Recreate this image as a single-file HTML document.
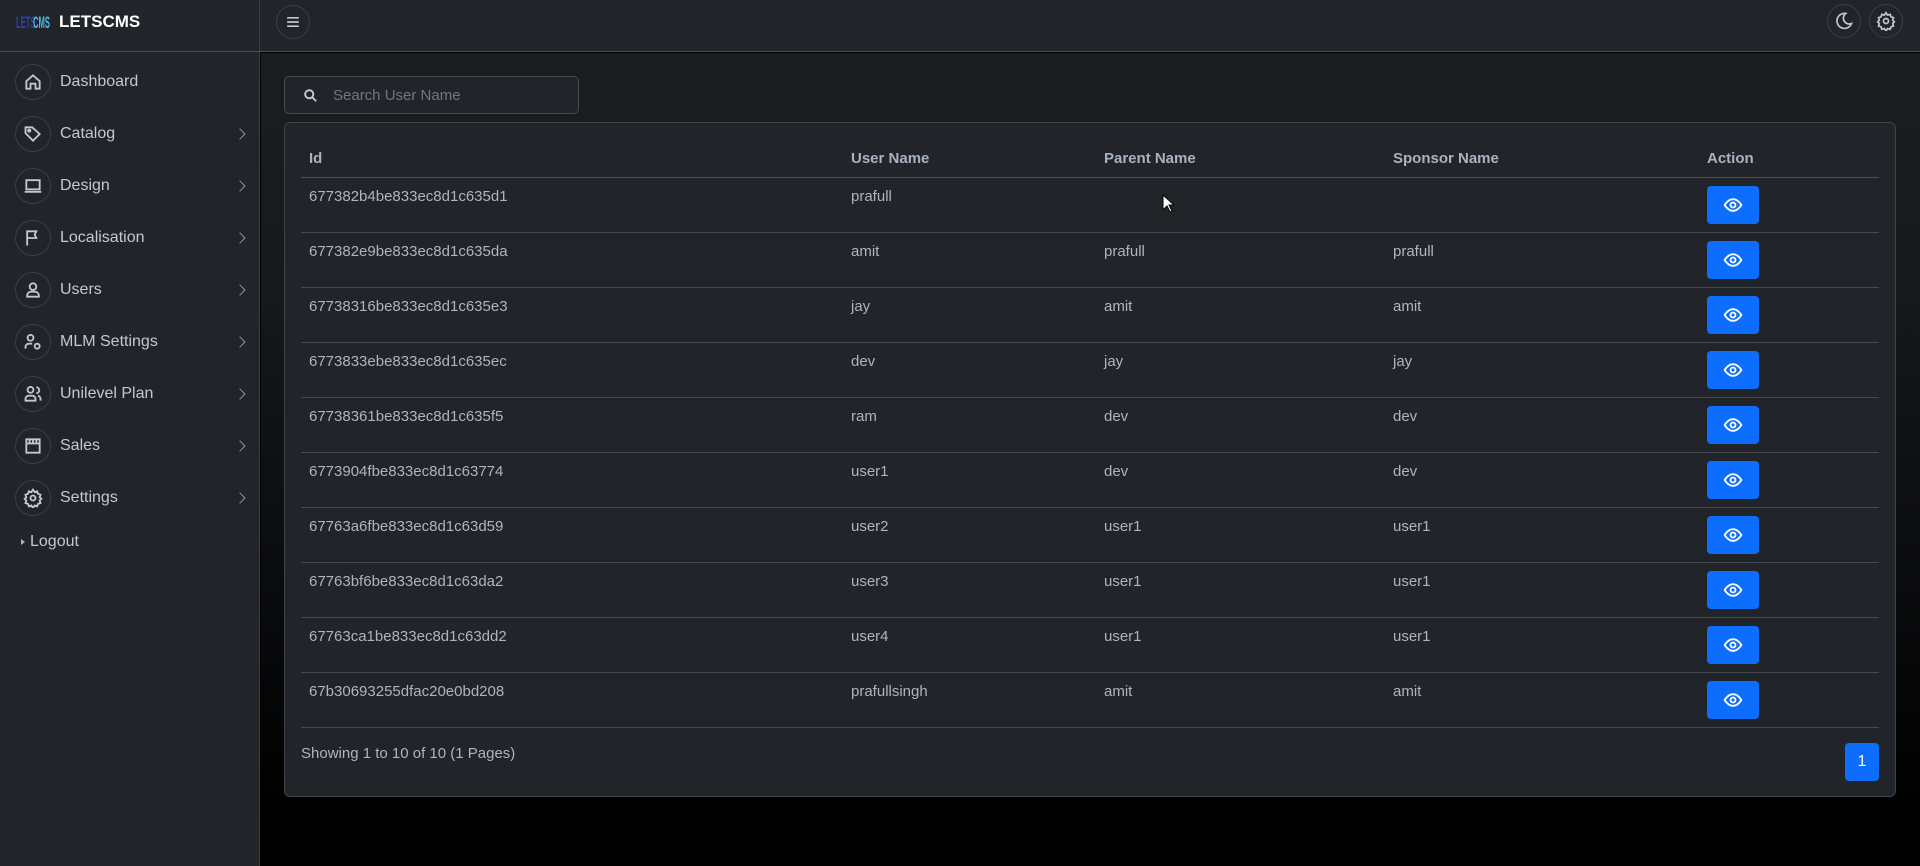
<!DOCTYPE html>
<html><head><meta charset="utf-8">
<style>
*{box-sizing:border-box;margin:0;padding:0}
html,body{width:1920px;height:866px;overflow:hidden}
body{font-family:"Liberation Sans",sans-serif;color:#adb5bd;background:#000;position:relative}
.side{position:absolute;left:0;top:0;width:260px;height:866px;background:#212529;border-right:1px solid #3a3f45}
.top{position:absolute;left:260px;top:0;right:0;height:52px;background:#212529;border-bottom:1px solid #4a4f55}
.lg{position:absolute;left:16px;top:14px;width:34px;height:17px;overflow:hidden}
.lg span{position:absolute;top:0;font-size:17px;font-weight:bold;line-height:17px;transform:scaleX(0.45);transform-origin:left;white-space:nowrap}
.lgt{position:absolute;left:59px;top:12px;color:#fff;font-weight:bold;font-size:17px}
.sl{position:absolute;left:0;top:51px;width:260px;border-top:1px solid #4a4f55}
.nav{position:absolute;left:15px;height:38px;width:235px;display:flex;align-items:center}
.nav .c{width:36px;height:36px;border:1px solid #3a3f45;border-radius:50%;display:flex;align-items:center;justify-content:center}
.nav .c svg{width:20px;height:20px;stroke:#c0c8d0;fill:none;stroke-width:2.2}
.nav .tx{margin-left:9px;font-size:16px;color:#c3c9cf}
.nav .ch{position:absolute;right:6px;top:15px;width:8px;height:8px;border-right:1.5px solid #8a939b;border-top:1.5px solid #8a939b;transform:rotate(45deg)}
.circ{position:absolute;width:34px;height:34px;border:1px solid #3a3f45;border-radius:50%;display:flex;align-items:center;justify-content:center}
.circ svg{width:20px;height:20px;stroke:#c0c8d0;fill:none;stroke-width:2}
.main{position:absolute;left:261px;top:53px;right:0;bottom:0;background:linear-gradient(#1b1d21,#16181b 30%,#000 95%)}
.search{position:absolute;left:284px;top:76px;width:295px;height:38px;border:1px solid #464b51;border-radius:5px;background:#212529}
.search span{position:absolute;left:48px;top:10px;font-size:15px;color:#70777e}
.card{position:absolute;left:284px;top:122px;width:1612px;height:675px;background:#212529;border:1px solid #3f444a;border-radius:6px}
table{position:absolute;left:16px;top:20px;width:1578px;border-collapse:collapse;font-size:15px}
th{text-align:left;color:#a7b3c0;font-weight:bold;height:34px;vertical-align:top;padding:7px 8px 0;border-bottom:1.5px solid #4a4f55;font-size:15px}
td{height:55px;vertical-align:top;padding:10px 8px 0;border-bottom:1px solid #44494f;color:#adb5bd}
td.a{padding-top:8px}
.btn{width:52px;height:38px;background:#0d6efd;border-radius:4px;display:flex;align-items:center;justify-content:center}
.foot{position:absolute;left:16px;top:622px;font-size:15px;color:#adb5bd}
.pg{position:absolute;left:1560px;top:620px;width:34px;height:38px;background:#0d6efd;border-radius:4px;color:#fff;font-size:16px;text-align:center;line-height:38px}
</style></head><body>
<div class="side">
<div class="lg"><span style="left:0;color:#3040a8">LETS</span><span style="left:17px;color:#4ab8e8">CMS</span></div>
<div class="lgt">LETSCMS</div>
<div class="sl"></div>
<div class="nav" style="top:63px"><div class="c"><svg viewBox="0 0 24 24"><path d="M4 11l8-7 8 7v9h-5v-6h-6v6H4z"/></svg></div><div class="tx">Dashboard</div></div>
<div class="nav" style="top:115px"><div class="c"><svg viewBox="0 0 24 24"><path d="M3 4v7l9 9 8-8-9-8H3z"/><circle cx="7.5" cy="8" r="1.3"/></svg></div><div class="tx">Catalog</div><div class="ch"></div></div>
<div class="nav" style="top:167px"><div class="c"><svg viewBox="0 0 24 24"><rect x="4" y="5" width="16" height="11"/><path d="M2 19h20"/></svg></div><div class="tx">Design</div><div class="ch"></div></div>
<div class="nav" style="top:219px"><div class="c"><svg viewBox="0 0 24 24"><path d="M5 21V4h11l-2 4 2 4H5"/></svg></div><div class="tx">Localisation</div><div class="ch"></div></div>
<div class="nav" style="top:271px"><div class="c"><svg viewBox="0 0 24 24"><circle cx="12" cy="8" r="4"/><path d="M5 20v-2a5 5 0 0 1 5-4h4a5 5 0 0 1 5 4v2z"/></svg></div><div class="tx">Users</div><div class="ch"></div></div>
<div class="nav" style="top:323px"><div class="c"><svg viewBox="0 0 24 24"><circle cx="9" cy="7" r="3.5"/><path d="M3 20v-2a4 4 0 0 1 4-4h4"/><circle cx="17" cy="17" r="3"/></svg></div><div class="tx">MLM Settings</div><div class="ch"></div></div>
<div class="nav" style="top:375px"><div class="c"><svg viewBox="0 0 24 24"><circle cx="9" cy="7" r="3.5"/><path d="M3 20v-2a4 4 0 0 1 4-4h4a4 4 0 0 1 4 4v2zM16 4a3.5 3.5 0 0 1 0 7M18 14a4 4 0 0 1 3 4v2"/></svg></div><div class="tx">Unilevel Plan</div><div class="ch"></div></div>
<div class="nav" style="top:427px"><div class="c"><svg viewBox="0 0 24 24"><path d="M4 4h16v16H4zM4 9h16M8 4v5M12 4v5M16 4v5"/></svg></div><div class="tx">Sales</div><div class="ch"></div></div>
<div class="nav" style="top:479px"><div class="c"><svg viewBox="0 0 24 24"><circle cx="12" cy="12" r="3"/><path d="M12 2l2 3 3-1 1 3 3 1-1 3 2 2-2 2 1 3-3 1-1 3-3-1-2 3-2-3-3 1-1-3-3-1 1-3-2-2 2-2-1-3 3-1 1-3 3 1z"/></svg></div><div class="tx">Settings</div><div class="ch"></div></div>
<div style="position:absolute;left:21px;top:539px;width:0;height:0;border-left:4px solid #adb5bd;border-top:3px solid transparent;border-bottom:3px solid transparent"></div>
<div style="position:absolute;left:30px;top:533px;font-size:16px;color:#c3c9cf">Logout</div>
</div>
<div class="top">
<div class="circ" style="left:16px;top:5px"><svg viewBox="0 0 24 24"><path d="M5 7h14M5 12h14M5 17h14"/></svg></div>
<div class="circ" style="left:1567px;top:4px"><svg viewBox="0 0 24 24"><path d="M14 3a9 9 0 1 0 7 12A7 7 0 0 1 14 3z"/></svg></div>
<div class="circ" style="left:1609px;top:4px"><svg viewBox="0 0 24 24"><circle cx="12" cy="12" r="3"/><path d="M12 2l2 3 3-1 1 3 3 1-1 3 2 2-2 2 1 3-3 1-1 3-3-1-2 3-2-3-3 1-1-3-3-1 1-3-2-2 2-2-1-3 3-1 1-3 3 1z"/></svg></div>
</div>
<div class="main"></div>
<div class="search"><svg style="position:absolute;left:18px;top:11px" width="15" height="15" viewBox="0 0 24 24" fill="none" stroke="#c8ced4" stroke-width="3"><circle cx="10" cy="10" r="6.5"/><path d="M15 15l6 6"/></svg><span>Search User Name</span></div>
<div class="card">
<table>
<colgroup><col style="width:542px"><col style="width:253px"><col style="width:289px"><col style="width:314px"><col></colgroup>
<tr><th>Id</th><th>User Name</th><th>Parent Name</th><th>Sponsor Name</th><th>Action</th></tr>
<tr><td>677382b4be833ec8d1c635d1</td><td>prafull</td><td></td><td></td><td class="a"><div class="btn"><svg width="20" height="20" viewBox="0 0 24 24" fill="none" stroke="#fff" stroke-width="2.2"><path d="M2 12s4-7 10-7 10 7 10 7-4 7-10 7S2 12 2 12z"/><circle cx="12" cy="12" r="3"/></svg></div></td></tr>
<tr><td>677382e9be833ec8d1c635da</td><td>amit</td><td>prafull</td><td>prafull</td><td class="a"><div class="btn"><svg width="20" height="20" viewBox="0 0 24 24" fill="none" stroke="#fff" stroke-width="2.2"><path d="M2 12s4-7 10-7 10 7 10 7-4 7-10 7S2 12 2 12z"/><circle cx="12" cy="12" r="3"/></svg></div></td></tr>
<tr><td>67738316be833ec8d1c635e3</td><td>jay</td><td>amit</td><td>amit</td><td class="a"><div class="btn"><svg width="20" height="20" viewBox="0 0 24 24" fill="none" stroke="#fff" stroke-width="2.2"><path d="M2 12s4-7 10-7 10 7 10 7-4 7-10 7S2 12 2 12z"/><circle cx="12" cy="12" r="3"/></svg></div></td></tr>
<tr><td>6773833ebe833ec8d1c635ec</td><td>dev</td><td>jay</td><td>jay</td><td class="a"><div class="btn"><svg width="20" height="20" viewBox="0 0 24 24" fill="none" stroke="#fff" stroke-width="2.2"><path d="M2 12s4-7 10-7 10 7 10 7-4 7-10 7S2 12 2 12z"/><circle cx="12" cy="12" r="3"/></svg></div></td></tr>
<tr><td>67738361be833ec8d1c635f5</td><td>ram</td><td>dev</td><td>dev</td><td class="a"><div class="btn"><svg width="20" height="20" viewBox="0 0 24 24" fill="none" stroke="#fff" stroke-width="2.2"><path d="M2 12s4-7 10-7 10 7 10 7-4 7-10 7S2 12 2 12z"/><circle cx="12" cy="12" r="3"/></svg></div></td></tr>
<tr><td>6773904fbe833ec8d1c63774</td><td>user1</td><td>dev</td><td>dev</td><td class="a"><div class="btn"><svg width="20" height="20" viewBox="0 0 24 24" fill="none" stroke="#fff" stroke-width="2.2"><path d="M2 12s4-7 10-7 10 7 10 7-4 7-10 7S2 12 2 12z"/><circle cx="12" cy="12" r="3"/></svg></div></td></tr>
<tr><td>67763a6fbe833ec8d1c63d59</td><td>user2</td><td>user1</td><td>user1</td><td class="a"><div class="btn"><svg width="20" height="20" viewBox="0 0 24 24" fill="none" stroke="#fff" stroke-width="2.2"><path d="M2 12s4-7 10-7 10 7 10 7-4 7-10 7S2 12 2 12z"/><circle cx="12" cy="12" r="3"/></svg></div></td></tr>
<tr><td>67763bf6be833ec8d1c63da2</td><td>user3</td><td>user1</td><td>user1</td><td class="a"><div class="btn"><svg width="20" height="20" viewBox="0 0 24 24" fill="none" stroke="#fff" stroke-width="2.2"><path d="M2 12s4-7 10-7 10 7 10 7-4 7-10 7S2 12 2 12z"/><circle cx="12" cy="12" r="3"/></svg></div></td></tr>
<tr><td>67763ca1be833ec8d1c63dd2</td><td>user4</td><td>user1</td><td>user1</td><td class="a"><div class="btn"><svg width="20" height="20" viewBox="0 0 24 24" fill="none" stroke="#fff" stroke-width="2.2"><path d="M2 12s4-7 10-7 10 7 10 7-4 7-10 7S2 12 2 12z"/><circle cx="12" cy="12" r="3"/></svg></div></td></tr>
<tr><td>67b30693255dfac20e0bd208</td><td>prafullsingh</td><td>amit</td><td>amit</td><td class="a"><div class="btn"><svg width="20" height="20" viewBox="0 0 24 24" fill="none" stroke="#fff" stroke-width="2.2"><path d="M2 12s4-7 10-7 10 7 10 7-4 7-10 7S2 12 2 12z"/><circle cx="12" cy="12" r="3"/></svg></div></td></tr>
</table>
<div class="foot">Showing 1 to 10 of 10 (1 Pages)</div>
<div class="pg">1</div>
</div>
<svg style="position:absolute;left:1162px;top:194px" width="12" height="20" viewBox="0 0 12 20"><path d="M1 1v15l4-4 3 6 2-1-3-6h5z" fill="#fff" stroke="#000" stroke-width="1"/></svg>
</body></html>
